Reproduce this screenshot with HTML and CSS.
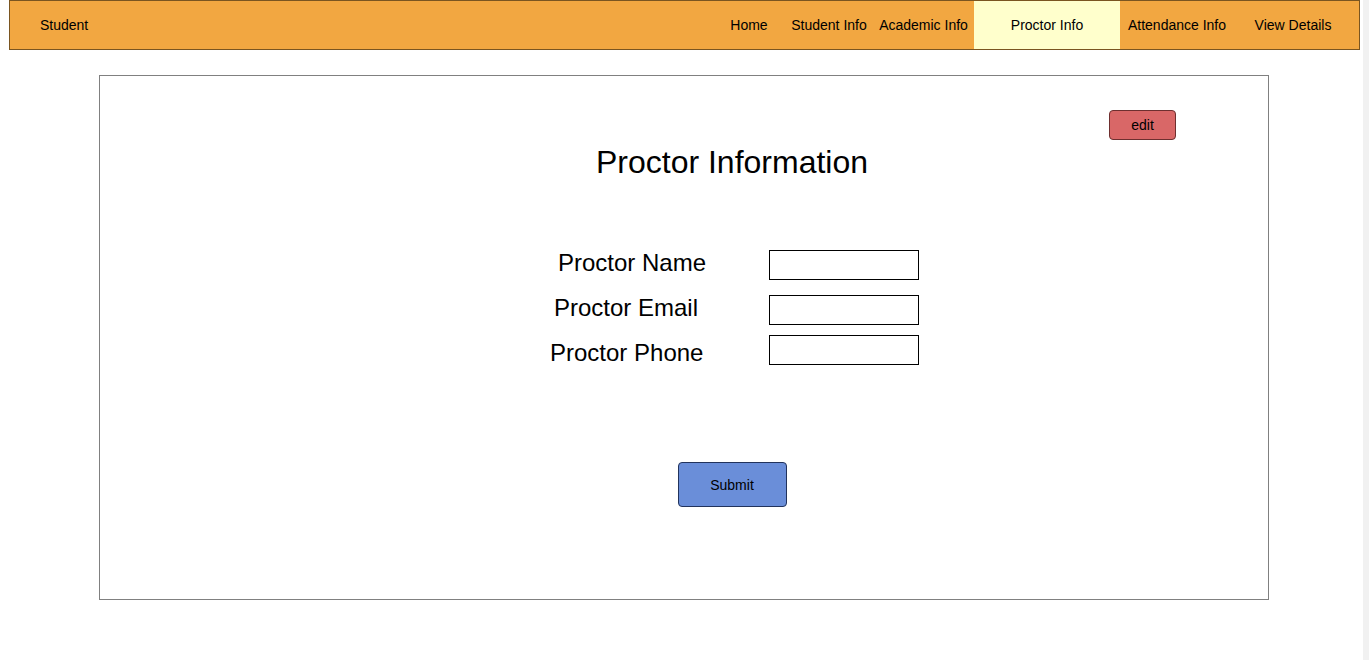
FILE: index.html
```html
<!DOCTYPE html>
<html lang="en">
<head>
<meta charset="utf-8">
<title>Proctor Information</title>
<link rel="stylesheet" href="styles.css">
</head>
<body>
<div class="page">
  <header class="navbar">
    <div class="brand">Student</div>
    <nav class="nav">
      <a class="nav-item w-home">Home</a>
      <a class="nav-item w-student">Student Info</a>
      <a class="nav-item w-academic">Academic Info</a>
      <a class="nav-item w-proctor active">Proctor Info</a>
      <a class="nav-item w-attendance">Attendance Info</a>
      <a class="nav-item w-details">View Details</a>
    </nav>
  </header>

  <main class="panel">
    <div class="panel-top">
      <button class="btn-edit">edit</button>
    </div>
    <div class="content">
      <h1 class="title">Proctor Information</h1>
      <form class="form">
        <div class="row row-name">
          <label class="label">Proctor Name</label>
          <input class="field" type="text">
        </div>
        <div class="row row-email">
          <label class="label">Proctor Email</label>
          <input class="field" type="text">
        </div>
        <div class="row row-phone">
          <label class="label">Proctor Phone</label>
          <input class="field" type="text">
        </div>
        <div class="actions">
          <button class="btn-submit" type="button">Submit</button>
        </div>
      </form>
    </div>
  </main>
</div>
<div class="scroll-strip"></div>
</body>
</html>
```

FILE: styles.css
```css
* { box-sizing: border-box; }

html, body {
  margin: 0;
  padding: 0;
  background: #ffffff;
}

body {
  display: flex;
  min-height: 100vh;
  font-family: "Liberation Sans", Arial, sans-serif;
  color: #000;
}

.page {
  width: 1363px;
  flex: none;
}

.scroll-strip {
  flex: 1;
  background: #f1f1f1;
}

/* Navbar */
.navbar {
  margin-left: 9px;
  width: 1351px;
  height: 50px;
  background: #f2a741;
  border: 1px solid #7a5520;
  display: flex;
  align-items: stretch;
  font-size: 14px;
}

.brand {
  padding: 1px 0 0 30px;
  line-height: 47px;
  flex: 1;
}

.nav {
  display: flex;
  align-items: stretch;
  padding-right: 7px;
}

.nav-item {
  text-align: center;
  padding-top: 1px;
  line-height: 47px;
  color: #000;
  text-decoration: none;
  white-space: nowrap;
}

.w-home { width: 72px; }
.w-student { width: 88px; }
.w-academic { width: 101px; }
.w-proctor { width: 146px; }
.w-attendance { width: 114px; }
.w-details { width: 118px; }

.nav-item.active {
  background: #ffffcc;
}

/* Panel */
.panel {
  margin: 25px 0 0 99px;
  width: 1170px;
  height: 525px;
  border: 1px solid #808080;
}

.panel-top {
  display: flex;
  justify-content: flex-end;
  padding: 34px 92px 0 0;
}

.btn-edit {
  width: 67px;
  height: 30px;
  background: #d96767;
  border: 1px solid #6e2f2f;
  border-radius: 4px;
  font-family: "Liberation Sans", Arial, sans-serif;
  font-size: 14px;
  color: #000;
  padding: 0;
}

.content {
  width: 500px;
  margin-left: 382px;
}

.title {
  margin: 4px 0 0;
  font-size: 32px;
  line-height: 36px;
  font-weight: normal;
  text-align: center;
}

.form {
  margin-top: 70px;
}

.row {
  display: flex;
  align-items: flex-start;
}

.label {
  width: 287px;
  font-size: 24px;
  line-height: 26px;
}

.row-name .label { padding-left: 76px; }
.row-email { margin-top: 15px; }
.row-email .label { padding-left: 72px; }
.row-phone { margin-top: 10px; height: 30px; }
.row-phone .label { padding-left: 68px; padding-top: 5px; }

.field {
  width: 150px;
  height: 30px;
  border: 1px solid #000;
  border-radius: 0;
  background: #fff;
  margin: 0;
  padding: 0 4px;
}

.actions {
  display: flex;
  justify-content: center;
  margin-top: 97px;
}

.btn-submit {
  width: 109px;
  height: 45px;
  background: #6a8ed9;
  border: 1px solid #22335c;
  border-radius: 4px;
  font-family: "Liberation Sans", Arial, sans-serif;
  font-size: 14px;
  color: #000;
  padding: 0;
}
```
